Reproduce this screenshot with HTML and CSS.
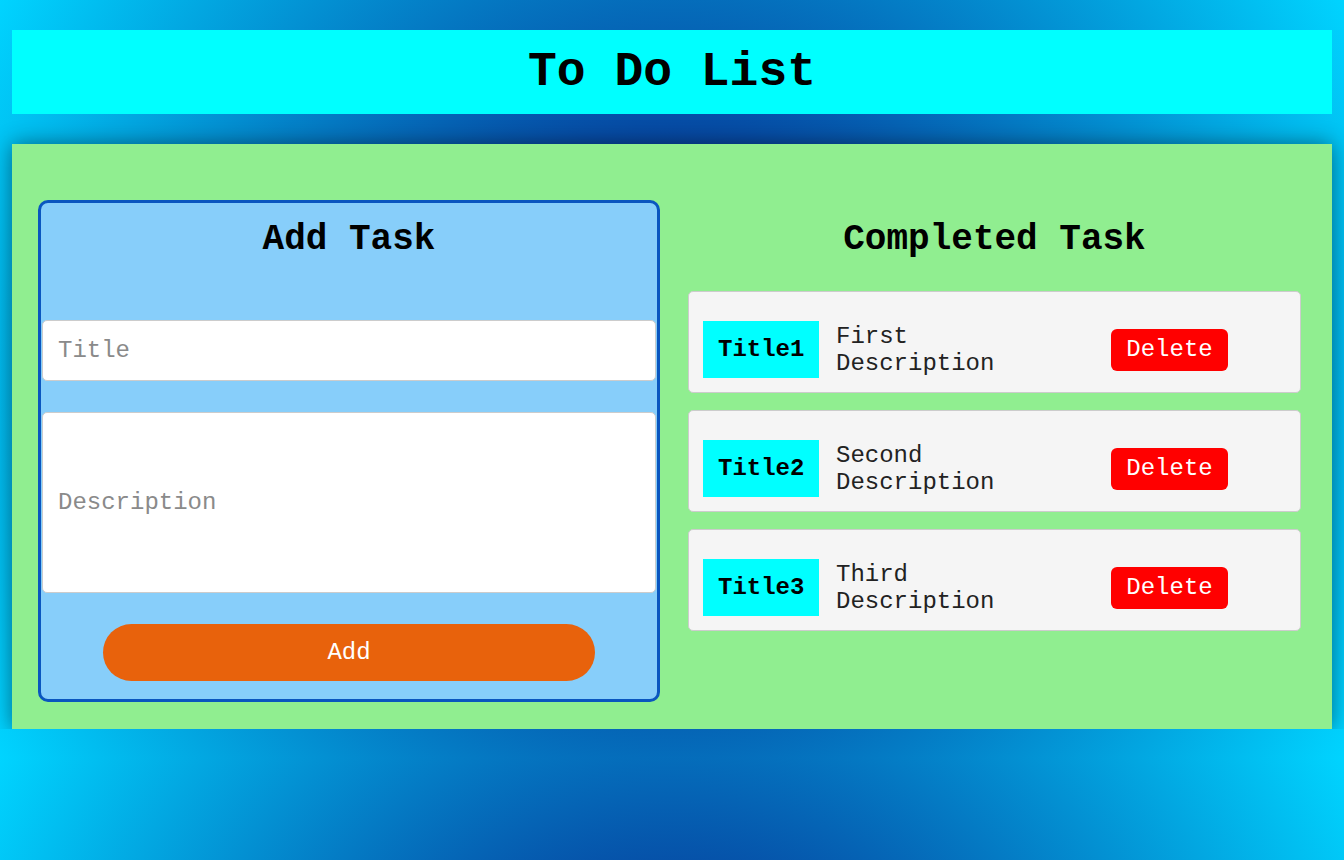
FILE: index.html
```html
<!DOCTYPE html>
<html lang="en">
<head>
<meta charset="utf-8">
<title>To Do List</title>
<link rel="stylesheet" href="styles.css">
</head>
<body>
  <header class="topbar">
    <h1 class="topbar-title">To Do List</h1>
  </header>
  <main class="board">
    <section class="add-card">
      <h2 class="section-title">Add Task</h2>
      <input class="field field-title" type="text" placeholder="Title">
      <input class="field field-desc" type="text" placeholder="Description">
      <button class="add-btn" type="button">Add</button>
    </section>
    <section class="done-col">
      <h2 class="section-title">Completed Task</h2>
      <div class="task-list">
        <div class="task">
          <div class="task-title">Title1</div>
          <div class="task-desc">First Description</div>
          <button class="del-btn" type="button">Delete</button>
        </div>
        <div class="task">
          <div class="task-title">Title2</div>
          <div class="task-desc">Second Description</div>
          <button class="del-btn" type="button">Delete</button>
        </div>
        <div class="task">
          <div class="task-title">Title3</div>
          <div class="task-desc">Third Description</div>
          <button class="del-btn" type="button">Delete</button>
        </div>
      </div>
    </section>
  </main>
</body>
</html>
```
FILE: styles.css
```css
* { box-sizing: border-box; }

html {
  background: radial-gradient(circle, rgb(9, 9, 121) 0%, rgb(0, 212, 255) 100%);
  background-size: 100% 758px;
  background-repeat: repeat;
  min-height: 100%;
}

body {
  margin: 0;
  font-family: "Liberation Mono", "Courier New", monospace;
  color: #000;
}

.topbar {
  margin: 30px 12px 0;
  height: 84px;
  background: #00ffff;
  display: flex;
  align-items: center;
  justify-content: center;
}

.topbar-title {
  margin: 0;
  font-size: 48px;
  font-weight: bold;
  line-height: 54px;
}

.board {
  margin: 30px 12px 0;
  height: 585px;
  background: #90ee90;
  box-shadow: 0 0 20px rgba(0, 0, 0, 0.45);
  padding: 56px 31px 0 26px;
  display: flex;
  gap: 28px;
  align-items: flex-start;
}

.add-card {
  width: 622px;
  flex: none;
  height: 502px;
  border: 3px solid #0a56bf;
  border-radius: 10px;
  background: #87cefa;
  padding: 0 1px 18px;
  display: flex;
  flex-direction: column;
}

.section-title {
  margin: 16px 0 0;
  font-size: 36px;
  line-height: 41px;
  font-weight: bold;
  text-align: center;
}

.done-col .section-title {
  margin-top: 19px;
}

.field {
  display: block;
  width: 100%;
  border: 1px solid #cccccc;
  border-radius: 5px;
  background: #fff;
  padding: 0 15px;
  font-family: "Liberation Mono", "Courier New", monospace;
  font-size: 24px;
  color: #000;
  outline: none;
}

.field::placeholder {
  color: #8a8a8a;
}

.field-title {
  margin-top: 60px;
  height: 61px;
}

.field-desc {
  margin-top: 31px;
  height: 181px;
}

.add-btn {
  margin: 31px auto 0;
  width: 492px;
  height: 57px;
  border: none;
  border-radius: 29px;
  background: #e8620c;
  color: #fff;
  font-family: "Liberation Mono", "Courier New", monospace;
  font-size: 24px;
}

.done-col {
  width: 613px;
  flex: none;
}

.task-list {
  margin-top: 31px;
  display: flex;
  flex-direction: column;
  gap: 17px;
}

.task {
  height: 102px;
  background: #f5f5f5;
  border: 1px solid #cccccc;
  border-radius: 5px;
  padding: 29px 15px 14px 14px;
  display: flex;
  align-items: center;
}

.task-title {
  background: #00ffff;
  padding: 15px;
  width: 116px;
  flex: none;
  font-size: 24px;
  line-height: 27px;
  font-weight: bold;
  white-space: nowrap;
}

.task-desc {
  margin-left: 17px;
  width: 200px;
  flex: none;
  font-size: 24px;
  line-height: 27px;
  color: #222;
}

.del-btn {
  margin-left: 75px;
  height: 42px;
  width: 117px;
  border: none;
  border-radius: 6px;
  background: #ff0000;
  color: #fff;
  font-family: "Liberation Mono", "Courier New", monospace;
  font-size: 24px;
  padding: 0;
}
```
